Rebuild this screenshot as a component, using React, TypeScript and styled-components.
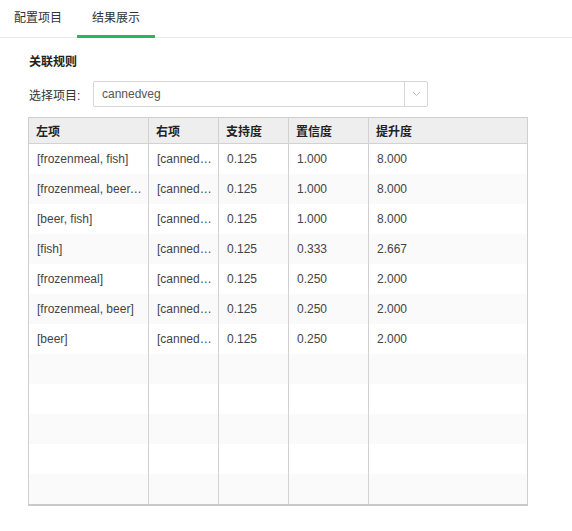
import React from "react";
import styled, { createGlobalStyle } from "styled-components";

const GlobalStyle = createGlobalStyle`
  body {
    margin: 0;
    background: #fff;
    font-family: "Liberation Sans", Arial, "Noto Sans CJK SC", sans-serif;
    color: #333;
  }
`;

interface IRule {
  left: string;
  right: string;
  support: string;
  confidence: string;
  lift: string;
}

const RULES: IRule[] = [
  { left: "[frozenmeal, fish]", right: "[cannedveg]", support: "0.125", confidence: "1.000", lift: "8.000" },
  { left: "[frozenmeal, beer, fish]", right: "[cannedveg]", support: "0.125", confidence: "1.000", lift: "8.000" },
  { left: "[beer, fish]", right: "[cannedveg]", support: "0.125", confidence: "1.000", lift: "8.000" },
  { left: "[fish]", right: "[cannedveg]", support: "0.125", confidence: "0.333", lift: "2.667" },
  { left: "[frozenmeal]", right: "[cannedveg]", support: "0.125", confidence: "0.250", lift: "2.000" },
  { left: "[frozenmeal, beer]", right: "[cannedveg]", support: "0.125", confidence: "0.250", lift: "2.000" },
  { left: "[beer]", right: "[cannedveg]", support: "0.125", confidence: "0.250", lift: "2.000" },
];

const COLUMNS = [
  { title: "左项", width: 120 },
  { title: "右项", width: 70 },
  { title: "支持度", width: 70 },
  { title: "置信度", width: 80 },
  { title: "提升度", width: 0 },
];

const TOTAL_ROWS = 12;

const App: React.FC = () => {
  const rows: (IRule | null)[] = [];
  for (let i = 0; i < TOTAL_ROWS; i++) rows.push(RULES[i] || null);

  return (
    <>
      <GlobalStyle />
      <Page>
        <TabBar>
          <Tab>配置项目</Tab>
          <Tab active>结果展示</Tab>
        </TabBar>
        <Content>
          <SectionTitle>关联规则</SectionTitle>
          <FormRow>
            <Label>选择项目:</Label>
            <Select>
              <SelectValue>cannedveg</SelectValue>
              <SelectArrow>
                <svg width="9" height="6" viewBox="0 0 9 6">
                  <path d="M1 1l3.5 3.5L8 1" fill="none" stroke="#bbb" strokeWidth="1" />
                </svg>
              </SelectArrow>
            </Select>
          </FormRow>
          <Table>
            <HeadRow>
              {COLUMNS.map((c) => (
                <HeadCell key={c.title} w={c.width}>
                  {c.title}
                </HeadCell>
              ))}
            </HeadRow>
            {rows.map((r, idx) => (
              <BodyRow key={idx} striped={idx % 2 === 1}>
                <Cell w={120} title={r?.left}>{r?.left}</Cell>
                <Cell w={70} title={r?.right}>{r?.right}</Cell>
                <Cell w={70}>{r?.support}</Cell>
                <Cell w={80}>{r?.confidence}</Cell>
                <Cell w={0}>{r?.lift}</Cell>
              </BodyRow>
            ))}
          </Table>
        </Content>
      </Page>
    </>
  );
};

export default App;

const Page = styled.div`
  width: 572px;
  height: 531px;
  background: #fff;
`;

const TabBar = styled.div`
  display: flex;
  height: 38px;
  border-bottom: 1px solid #e8e8e8;
  box-sizing: border-box;
`;

const Tab = styled.div<{ active?: boolean }>`
  width: 78px;
  box-sizing: border-box;
  display: flex;
  justify-content: center;
  padding-top: 8px;
  font-size: 12px;
  color: #333;
  border-bottom: 3px solid ${({ active }) => (active ? "#2db55d" : "transparent")};
  height: 38px;
  &:first-child {
    width: 77px;
    padding-right: 1px;
  }
`;

const Content = styled.div`
  padding: 16px 0 0 28px;
`;

const SectionTitle = styled.div`
  font-size: 12px;
  font-weight: bold;
  color: #222;
  padding-left: 1px;
  height: 17px;
  line-height: 17px;
`;

const FormRow = styled.div`
  display: flex;
  align-items: center;
  margin-top: 10px;
`;

const Label = styled.div`
  width: 64px;
  padding-left: 1px;
  font-size: 12px;
  color: #333;
`;

const Select = styled.div`
  width: 335px;
  height: 26px;
  box-sizing: border-box;
  border: 1px solid #d6d6d6;
  border-radius: 2px;
  display: flex;
  align-items: stretch;
`;

const SelectValue = styled.div`
  flex: 1;
  display: flex;
  align-items: center;
  padding-left: 8px;
  font-size: 12px;
  color: #555;
`;

const SelectArrow = styled.div`
  width: 22px;
  border-left: 1px solid #d6d6d6;
  display: flex;
  align-items: center;
  justify-content: center;
`;

const Table = styled.div`
  margin-top: 10px;
  width: 500px;
  box-sizing: border-box;
  border: 1px solid #cfcfcf;
  border-bottom: 2px solid #c9c9c9;
`;

const HeadRow = styled.div`
  display: flex;
  height: 25px;
  background: #eeeeee;
  border-bottom: 1px solid #d2d2d2;
`;

const HeadCell = styled.div<{ w: number }>`
  ${({ w }) => (w ? `width: ${w}px;` : "flex: 1;")}
  flex-shrink: 0;
  box-sizing: border-box;
  padding-left: 7px;
  display: flex;
  align-items: center;
  font-size: 12px;
  font-weight: bold;
  color: #222;
  border-right: 1px solid #d2d2d2;
  &:last-child {
    border-right: none;
  }
`;

const BodyRow = styled.div<{ striped: boolean }>`
  display: flex;
  height: 30px;
  background: ${({ striped }) => (striped ? "#fafafa" : "#fff")};
`;

const Cell = styled.div<{ w: number }>`
  ${({ w }) => (w ? `width: ${w}px;` : "flex: 1;")}
  flex-shrink: 0;
  min-width: 0;
  box-sizing: border-box;
  padding: 0 6px 0 8px;
  line-height: 30px;
  font-size: 12px;
  color: #444;
  white-space: nowrap;
  overflow: hidden;
  text-overflow: ellipsis;
  border-right: 1px solid #d2d2d2;
  &:last-child {
    border-right: none;
  }
`;
